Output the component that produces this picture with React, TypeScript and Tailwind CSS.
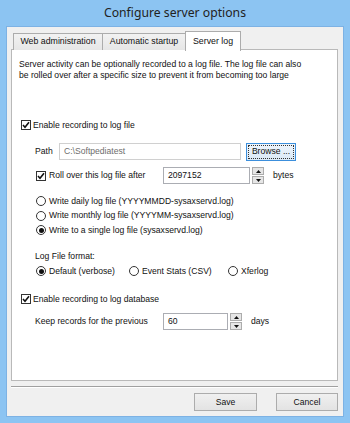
import React from "react";

const F = { fontFamily: '"Liberation Sans", Arial, sans-serif' };

function Check({ checked }: { checked: boolean }) {
  return (
    <div className="w-[10px] h-[10px] border border-[#333] bg-white flex items-center justify-center shrink-0">
      {checked && (
        <svg width="8" height="8" viewBox="0 0 8 8">
          <path d="M1 4 L3 6.2 L7 1.2" stroke="#111" strokeWidth="1.6" fill="none" />
        </svg>
      )}
    </div>
  );
}

function Radio({ checked }: { checked: boolean }) {
  return (
    <div className="w-[10px] h-[10px] rounded-full border border-[#333] bg-white flex items-center justify-center shrink-0">
      {checked && <div className="w-[5px] h-[5px] rounded-full bg-[#111]" />}
    </div>
  );
}

function Spinner() {
  return (
    <div className="flex flex-col w-[12px] h-[17px] ml-[2px] gap-[1px]">
      <div className="flex-1 border border-[#acacac] bg-[#e6e6e6] flex items-center justify-center">
        <svg width="5" height="3" viewBox="0 0 5 3"><path d="M0 3 L2.5 0 L5 3Z" fill="#111" /></svg>
      </div>
      <div className="flex-1 border border-[#acacac] bg-[#e6e6e6] flex items-center justify-center">
        <svg width="5" height="3" viewBox="0 0 5 3"><path d="M0 0 L2.5 3 L5 0Z" fill="#111" /></svg>
      </div>
    </div>
  );
}

export default function App() {
  return (
    <div className="w-[350px] h-[423px] bg-[#8cc4f2] flex flex-col text-[#111] text-[8.6px]" style={F}>
      <div className="h-[26px] flex items-center justify-center">
        <span className="text-[12.2px] text-[#222] leading-none" style={{ fontFamily: '"Noto Sans", "Open Sans", sans-serif' }}>
          Configure server options
        </span>
      </div>
      <div className="flex-1 mx-[6px] mb-[6px] border border-[#7db2e4] bg-[#f0f0f0] flex flex-col pl-[4px] pr-[5px] pt-[4px]">
        {/* Tabs */}
        <div className="flex items-end h-[19px] pl-[2px] relative z-10">
          <div className="w-[90px] h-[17px] border border-b-0 border-[#acacac] bg-gradient-to-b from-[#f2f2f2] to-[#e6e6e6] flex items-center justify-center text-[8.8px]">
            Web administration
          </div>
          <div className="w-[84px] h-[17px] -ml-px border border-b-0 border-[#acacac] bg-gradient-to-b from-[#f2f2f2] to-[#e6e6e6] flex items-center justify-center text-[8.8px]">
            Automatic startup
          </div>
          <div className="w-[56px] h-[20px] -ml-px -mb-px border border-b-0 border-[#acacac] bg-white flex items-start pt-[3px] justify-center text-[8.8px]">
            Server log
          </div>
        </div>
        {/* Panel */}
        <div className="h-[332px] border border-[#b9b9b9] bg-white -mt-px pl-[7px] pt-[9px] leading-[11px]">
          <div className="whitespace-nowrap">
            Server activity can be optionally recorded to a log file. The log file can also
            <br />
            be rolled over after a specific size to prevent it from becoming too large
          </div>

          <div className="mt-[37px] h-[14px] flex items-center ml-[2px]">
            <Check checked />
            <span className="ml-[2px]">Enable recording to log file</span>
          </div>

          <div className="mt-[11px] h-[17px] flex items-center ml-[16px]">
            <span className="w-[24px]">Path</span>
            <div className="w-[182px] h-[17px] border border-[#d0d0d0] bg-white flex items-center pl-[4px] text-[#6d6d6d]">
              C:\Softpediatest
            </div>
            <div className="ml-[5px] w-[50px] h-[18px] border border-[#3c8fdc] bg-gradient-to-b from-[#eef5fc] to-[#dbe9f6] p-[1px]">
              <div className="w-full h-full border border-dotted border-[#333] flex items-center justify-center">
                Browse ...
              </div>
            </div>
          </div>

          <div className="mt-[7px] h-[17px] flex items-center ml-[17px]">
            <div className="w-[127px] flex items-center">
              <Check checked />
              <span className="ml-[3px]">Roll over this log file after</span>
            </div>
            <div className="w-[87px] h-[17px] border border-[#abadb3] bg-white flex items-center pl-[4px]">
              2097152
            </div>
            <Spinner />
            <span className="ml-[9px]">bytes</span>
          </div>

          <div className="mt-[10px] h-[14.5px] flex items-center ml-[17px]">
            <Radio checked={false} />
            <span className="ml-[3px]">Write daily log file (YYYYMMDD-sysaxservd.log)</span>
          </div>
          <div className="h-[14.5px] flex items-center ml-[17px]">
            <Radio checked={false} />
            <span className="ml-[3px]">Write monthly log file (YYYYMM-sysaxservd.log)</span>
          </div>
          <div className="h-[14.5px] flex items-center ml-[17px]">
            <Radio checked />
            <span className="ml-[3px]">Write to a single log file (sysaxservd.log)</span>
          </div>

          <div className="mt-[12px] h-[14px] flex items-center ml-[16px]">Log File format:</div>
          <div className="mt-[0.5px] h-[14px] flex items-center ml-[17px]">
            <Radio checked />
            <span className="ml-[3px] w-[80px]">Default (verbose)</span>
            <Radio checked={false} />
            <span className="ml-[3px] w-[86px]">Event Stats (CSV)</span>
            <Radio checked={false} />
            <span className="ml-[3px]">Xferlog</span>
          </div>

          <div className="mt-[14px] h-[14px] flex items-center ml-[2px]">
            <Check checked />
            <span className="ml-[2px]">Enable recording to log database</span>
          </div>

          <div className="mt-[7px] h-[17px] flex items-center ml-[16px]">
            <span className="w-[128px]">Keep records for the previous</span>
            <div className="w-[65px] h-[17px] border border-[#abadb3] bg-white flex items-center pl-[4px]">
              60
            </div>
            <Spinner />
            <span className="ml-[9px]">days</span>
          </div>
        </div>
        {/* Separator */}
        <div className="mt-[5px] h-[2px] border-t border-[#a0a0a0] border-b border-b-white" />
        {/* Buttons */}
        <div className="flex justify-end mt-[5px] gap-[19px]">
          <div className="w-[63px] h-[18px] border border-[#acacac] bg-gradient-to-b from-[#f0f0f0] to-[#e3e3e3] flex items-center justify-center">
            Save
          </div>
          <div className="w-[62px] h-[18px] border border-[#acacac] bg-gradient-to-b from-[#f0f0f0] to-[#e3e3e3] flex items-center justify-center">
            Cancel
          </div>
        </div>
      </div>
    </div>
  );
}
